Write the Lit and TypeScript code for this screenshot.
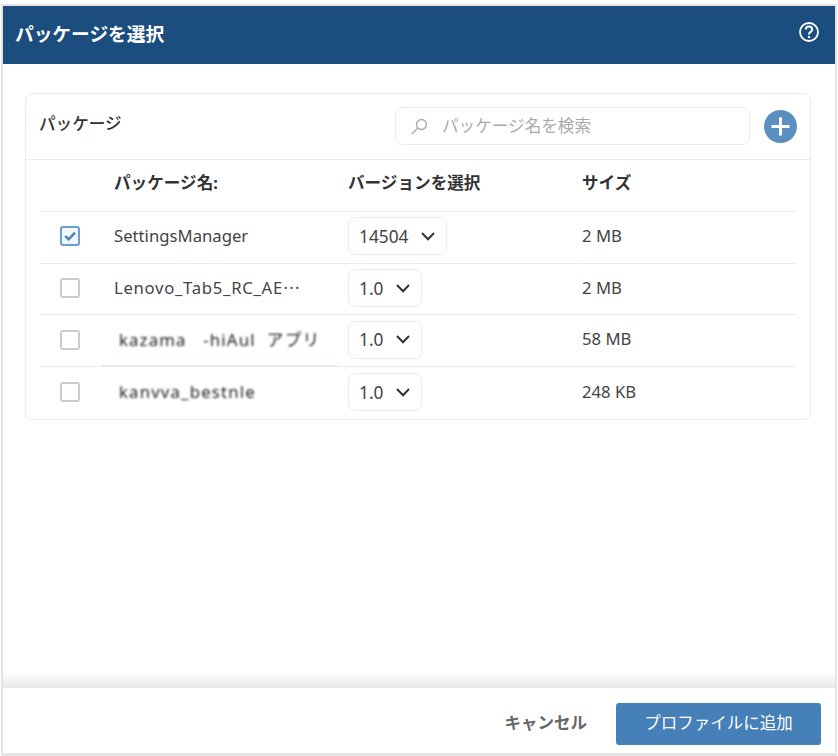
import { LitElement, html, css, unsafeCSS } from "lit";
import { customElement } from "lit/decorators.js";

const FONT = unsafeCSS(`"Noto Sans", "Noto Sans CJK JP", sans-serif`);

const chevron = html`<svg class="chev" width="14" height="9" viewBox="0 0 14 9" fill="none"><path d="M1 1 7 7.2 13 1" stroke="#333" stroke-width="2"/></svg>`;

const rows = [
  { name: "SettingsManager", ver: "14504", size: "2 MB", checked: true },
  { name: "Lenovo_Tab5_RC_AE", more: "···", ver: "1.0", size: "2 MB", long: true },
  { name: "kazama   -hiAul  アプリ", ver: "1.0", size: "58 MB", blur: true, mark: true },
  { name: "kanvva_bestnle", ver: "1.0", size: "248 KB", blur: true },
];

@customElement("app-root")
export class AppRoot extends LitElement {
  static styles = css`
    :host { display: block; width: 838px; height: 756px; background: #fff; font-family: ${FONT}; color: #444; overflow: hidden; }
    * { box-sizing: border-box; }
    .frame { margin: 4px 0 0 1px; width: 836px; height: 752px; border: 2px solid #e4e4e4; border-bottom-width: 3px; display: flex; flex-direction: column; background: #fff; }
    .head { height: 58px; flex: none; background: #1b4d7e; color: #fff; display: flex; align-items: center; justify-content: space-between; padding: 0 15px 6px 12px; font-size: 18.7px; font-weight: 700; }
    .head svg { display: block; }
    .body { flex: 1; padding: 29px 24px 0 22px; }
    .card { border: 1px solid #ececec; border-radius: 7px; height: 327px; }
    .bar { height: 66px; border-bottom: 1px solid #ececec; display: flex; align-items: center; padding: 0 13px 0 13px; }
    .bar h2 { margin: 0 0 8px; font-size: 16.6px; font-weight: 500; flex: 1; color: #333; }
    .search { width: 355px; height: 38px; border: 1px solid #ececec; border-radius: 7px; display: flex; align-items: center; padding-left: 15px; gap: 13px; font-size: 16.6px; color: #aaa; margin: 0 14px 1px 0; }
    .search span { margin-bottom: 2px; }
    .plus { width: 33px; height: 33px; border-radius: 50%; background: #5a8fc0; display: block; }
    .table { margin: 0 13px 0 14px; }
    .row { display: grid; grid-template-columns: 74px 234px 234px 1fr; align-items: center; height: 51.75px; padding-bottom: 1.5px; border-bottom: 1px solid #ececec; font-size: 16.7px; position: relative; }
    .row:last-child { border-bottom: 0; }
    .row.hd { font-weight: 700; font-size: 16.6px; color: #333; padding-bottom: 6px; }
    .box { width: 20px; height: 20px; margin-left: 20px; border: 2px solid #ccc; border-radius: 3px; display: block; background: #fff; }
    .box.on { border-color: #6b9fcf; background: #f2f7fb; }
    .box.on svg { display: block; }
    .sel { display: inline-flex; align-items: center; gap: 13px; height: 38px; padding: 0 11px 0 10px; border: 1px solid #ececec; border-radius: 7px; font-size: 17.3px; }
    .name, .size { padding-bottom: 2px; }
    .name { white-space: pre; }
    .name.long { letter-spacing: 0.7px; }
    .name.blur { filter: blur(0.9px); padding-left: 5px; letter-spacing: 1.2px; color: #222; }
    .more { letter-spacing: 1.3px; margin-left: 0.5px; }
    .mark { position: absolute; left: 61px; bottom: -1px; width: 236px; height: 2px; background: #e3e7eb; }
    .foot { height: 65px; flex: none; display: flex; align-items: center; justify-content: flex-end; gap: 29px; padding: 7px 14px 0 0; background: #fff; position: relative; }
    .foot::before { content: ""; position: absolute; left: 0; right: 0; top: -16px; height: 16px; background: linear-gradient(#ffffff, #e8e8e8); }
    .cancel { font-size: 16.5px; font-weight: 700; color: #666; margin-bottom: 4px; }
    .add { width: 205px; height: 42px; padding-bottom: 4px; background: #4680b8; color: #fff; border-radius: 3px; display: flex; align-items: center; justify-content: center; font-size: 16.5px; }
  `;

  render() {
    return html`<div class="frame">
      <div class="head"><span>パッケージを選択</span>
        <svg width="22" height="22" viewBox="0 0 22 22" fill="none" stroke="#fff"><circle cx="11" cy="11" r="9" stroke-width="1.8"/><path d="M7.8 8.6c0-1.9 1.4-3 3.2-3s3.2 1.1 3.2 2.8c0 2.6-3.2 2.4-3.2 5" stroke-width="2"/><circle cx="11" cy="16" r="1.2" fill="#fff" stroke="none"/></svg>
      </div>
      <div class="body">
        <div class="card">
          <div class="bar">
            <h2>パッケージ</h2>
            <div class="search">
              <svg width="18" height="18" viewBox="0 0 18 18" fill="none" stroke="#aaa" stroke-width="1.3"><circle cx="10.5" cy="7.5" r="5"/><path d="M6.8 11 0.8 17"/></svg>
              <span>パッケージ名を検索</span>
            </div>
            <svg class="plus" viewBox="0 0 33 33"><path d="M16.5 7.5v18M7.5 16.5h18" stroke="#fff" stroke-width="3" fill="none"/></svg>
          </div>
          <div class="table">
            <div class="row hd"><span></span><span>パッケージ名:</span><span>バージョンを選択</span><span>サイズ</span></div>
            ${rows.map(r => html`<div class="row">
              <span class="box ${r.checked ? "on" : ""}">${r.checked ? html`<svg width="16" height="16" viewBox="0 0 16 16" fill="none"><path d="M3.2 8 6.6 11.4 13 4.6" stroke="#4680b8" stroke-width="2.4"/></svg>` : ""}</span>
              <span class="name ${r.blur ? "blur" : ""} ${r.long ? "long" : ""}">${r.name}${r.more ? html`<span class="more">${r.more}</span>` : ""}</span>
              <span><span class="sel">${r.ver}${chevron}</span></span>
              <span class="size">${r.size}</span>
              ${r.mark ? html`<i class="mark"></i>` : ""}
            </div>`)}
          </div>
        </div>
      </div>
      <div class="foot"><span class="cancel">キャンセル</span><div class="add">プロファイルに追加</div></div>
    </div>`;
  }
}
